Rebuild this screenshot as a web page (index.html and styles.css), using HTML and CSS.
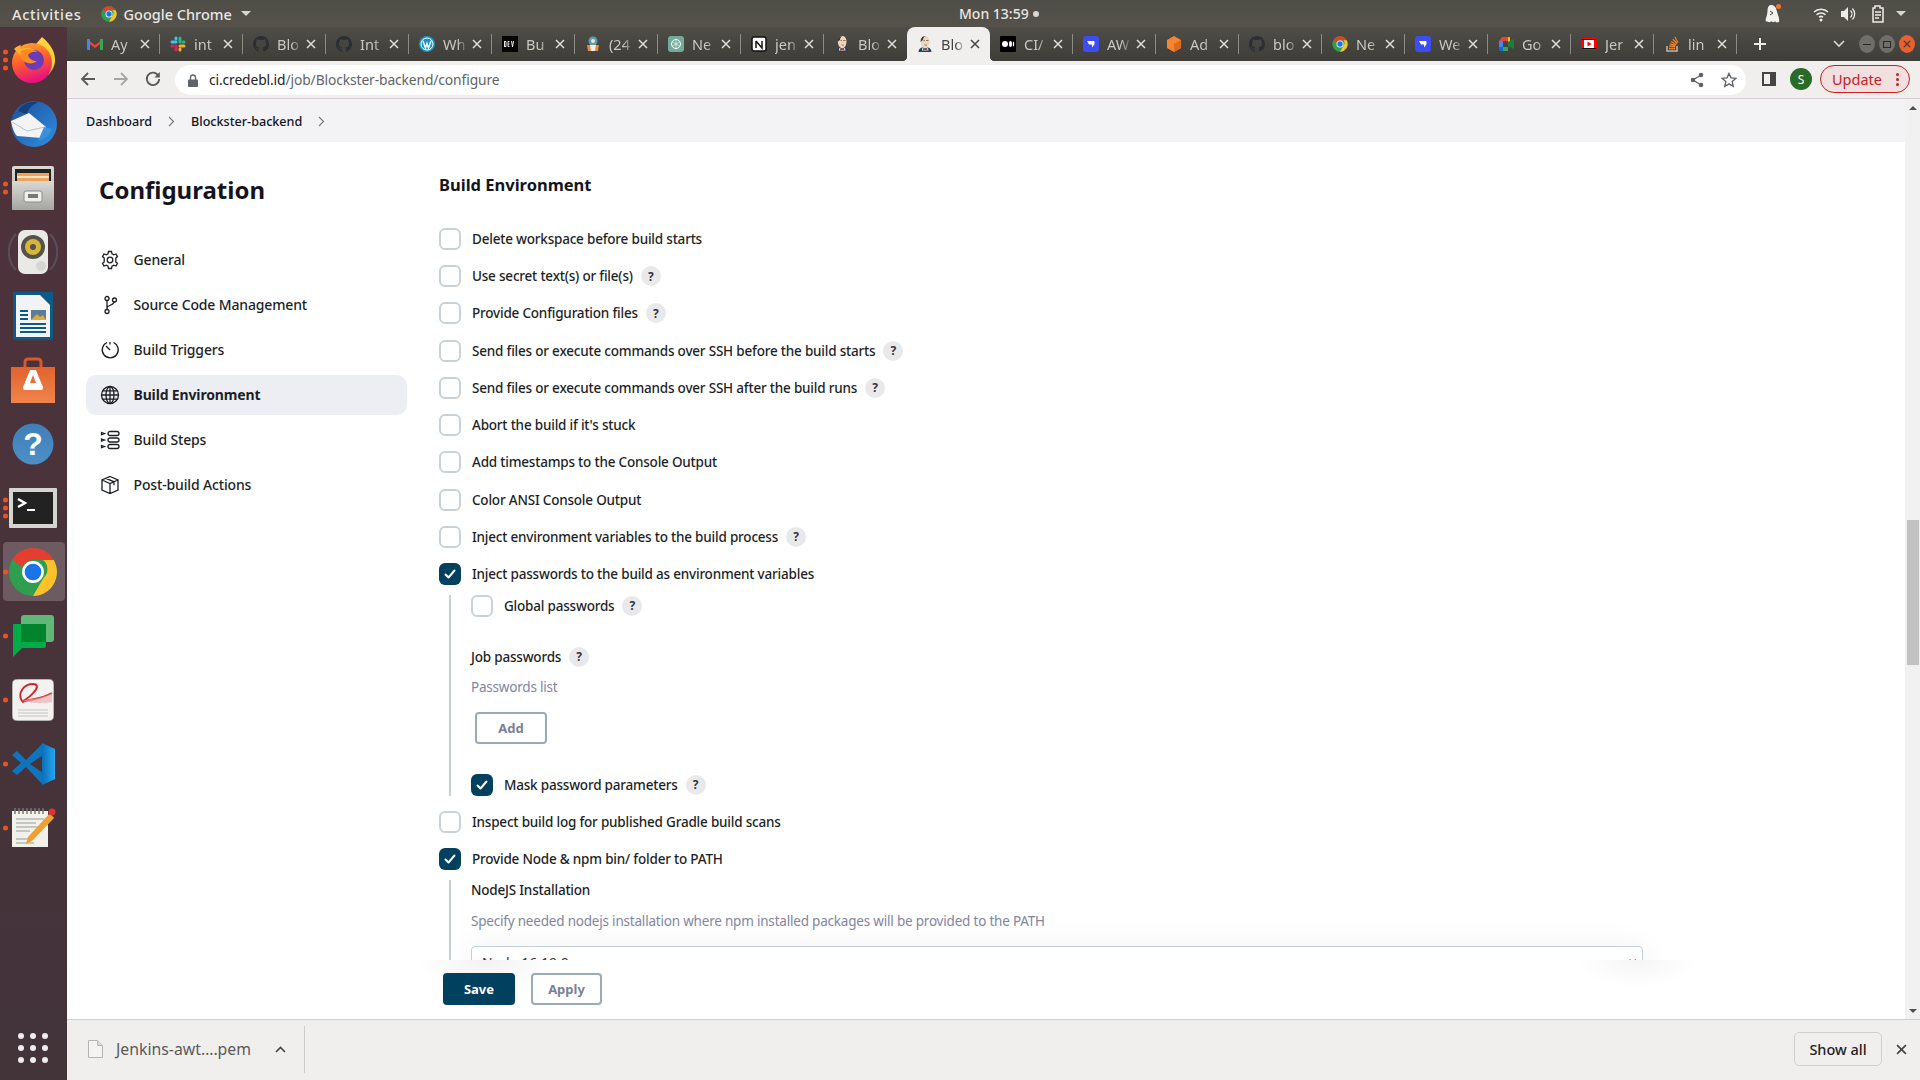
FILE: index.html
```html
<!DOCTYPE html>
<html lang="en">
<head>
    <meta charset="UTF-8">
    <title>Blockster-backend Config</title>
    <link rel="stylesheet" href="styles.css">
</head>
<body>
    <svg class="sprites" width="0" height="0">
        <defs>
            <linearGradient id="ff-body" x1="0" y1="0" x2="0.3" y2="1"><stop offset="0" stop-color="#ffb02e"/><stop offset="0.55" stop-color="#ff5a2c"/><stop offset="1" stop-color="#e9137f"/></linearGradient>
            <linearGradient id="tb-body" x1="0" y1="0" x2="1" y2="1"><stop offset="0" stop-color="#1d4f99"/><stop offset="1" stop-color="#2f8fe0"/></linearGradient>
            <linearGradient id="files-body" x1="0" y1="0" x2="0" y2="1"><stop offset="0" stop-color="#d9d9d6"/><stop offset="1" stop-color="#a5a5a2"/></linearGradient>
            <linearGradient id="bag-body" x1="0" y1="0" x2="0" y2="1"><stop offset="0" stop-color="#e2622e"/><stop offset="1" stop-color="#f0854a"/></linearGradient>
            <linearGradient id="help-body" x1="0" y1="0" x2="0" y2="1"><stop offset="0" stop-color="#3f7fb8"/><stop offset="1" stop-color="#4d8fc6"/></linearGradient>
            <linearGradient id="code-body" x1="0" y1="0" x2="1" y2="0"><stop offset="0" stop-color="#0a6fb8"/><stop offset="1" stop-color="#25a5f0"/></linearGradient>
            <symbol id="ic-github" viewBox="0 0 16 16"><path fill="#2b2f33" d="M8 0C3.6 0 0 3.6 0 8c0 3.5 2.3 6.5 5.5 7.6.4.1.5-.2.5-.4v-1.400c-2.200.5-2.700-1-2.700-1-.4-.9-.9-1.200-.9-1.200-.7-.5.1-.5.1-.5.8.1 1.200.8 1.200.8.7 1.200 1.900.9 2.300.7.1-.5.3-.9.5-1.100-1.800-.2-3.600-.9-3.600-4 0-.9.3-1.600.8-2.100-.1-.2-.4-1 .1-2.100 0 0 .7-.2 2.200.8a7.600 7.600 0 0 1 4 0c1.500-1 2.200-.8 2.200-.8.4 1.100.2 1.900.1 2.100.5.5.8 1.200.8 2.100 0 3.100-1.900 3.700-3.700 3.900.3.3.6.8.6 1.500v2.200c0 .2.1.5.6.4A8 8 0 0 0 16 8c0-4.400-3.600-8-8-8z"/></symbol>
            <symbol id="ic-jenkins" viewBox="0 0 16 16"><path fill="#24435c" d="M1.500 16c.2-2.500 1.500-4 3.500-4.500h6c2 .5 3.300 2 3.500 4.500z"/><path fill="#f0d6b9" d="M3.800 5.500C3.800 2 5.800 0 8.300 0s4.200 2 4.200 5.500c0 3.500-1.800 6.800-4.200 6.800S3.800 9 3.800 5.500z"/><path fill="#3a3a3a" d="M3.800 6C3.200 3 5 0 8.300 0 7 1 6 2 6 4c-.8.3-1.700 1-2.200 2z"/><path fill="#fff" d="M5.500 11.800l2.700 2.200 2.700-2.200.6 2.700H5z"/><path fill="#d33833" d="M6 12.500l2.200 1 2.200-1v2.500l-2.200-1-2.200 1z"/><path stroke="#555" stroke-width=".7" fill="none" d="M9 4.500h2.500M6.500 4.500H8M7.500 8.800c.8.5 1.700.5 2.500 0"/></symbol>
            <symbol id="ic-webflow" viewBox="0 0 16 16"><rect width="16" height="16" rx="3" fill="#3e4cf4"/><path fill="#fff" d="M4 5h7.500v3.200L9 11.500V8.500H6z"/></symbol>
            <symbol id="ic-chrome" viewBox="0 0 48 48"><circle cx="24" cy="24" r="23" fill="#2f9e4f"/><path fill="#e53d30" d="M24 1a23 23 0 0 1 19.900 11.500H24a11.500 11.500 0 0 0-10.600 7L4.300 12.300A23 23 0 0 1 24 1z"/><path fill="#fdc12b" d="M43.900 12.500A23 23 0 0 1 24 47l9.900-17.100a11.500 11.500 0 0 0 0-17.400z"/><circle cx="24" cy="24" r="10.500" fill="#fff"/><circle cx="24" cy="24" r="8" fill="#1a73e8"/></symbol>
            <symbol id="ic-close" viewBox="0 0 10 10"><path d="M1 1l8 8M9 1l-8 8" stroke="currentColor" stroke-width="1.500" fill="none"/></symbol>
            <symbol id="ic-check" viewBox="0 0 22 22"><path d="M6.500 11.500l3 3 6-7" stroke="#fff" stroke-width="2" fill="none" stroke-linecap="round" stroke-linejoin="round"/></symbol>
        </defs>
    </svg>

    <div class="system-bar">
        <div class="system-left">
            <span class="system-activities">Activities</span>
            <span class="system-app">
                <svg class="system-app-icon" width="16" height="16"><use href="#ic-chrome"/></svg>
                <span class="system-text">Google Chrome</span>
                <span class="caret"></span>
            </span>
        </div>
        <div class="system-clock">
            <span class="system-text">Mon 13:59</span>
            <span class="clock-dot"></span>
        </div>
        <div class="system-tray">
            <svg class="tray-person" width="20" height="22" viewBox="0 0 20 22"><path fill="#f4f2ee" d="M8 2c3 0 5 2 5.500 5l1.500 5c1 2.500 1.500 5 1 7-2 .8-3 .5-3.500-.5h-1c-.5 1-1.500 1-2.500 0H8c-1 1-2.500 1-3.500 0C3 19 2 18 3 15c1-3 1.500-5 1.500-8C4.500 4 6 2 8 2z"/><path d="M7 8l3 2-3 2" stroke="#444" fill="none"/><circle cx="15.500" cy="3.500" r="2.500" fill="#f0762e"/></svg>
            <svg class="tray-wifi" width="16" height="16" viewBox="0 0 16 16"><path d="M1 6a10 10 0 0 1 14 0M3.500 8.700a6.500 6.500 0 0 1 9 0M6 11.300a3 3 0 0 1 4 0" stroke="#eeece8" stroke-width="1.500" fill="none"/><circle cx="8" cy="14" r="1.500" fill="#eeece8"/></svg>
            <svg class="tray-sound" width="17" height="16" viewBox="0 0 17 16"><path fill="#eeece8" d="M1 5h3l4-4v14l-4-4H1z"/><path d="M10.500 4.500a5 5 0 0 1 0 7M12.500 2.500a8 8 0 0 1 0 11" stroke="#eeece8" stroke-width="1.300" fill="none"/></svg>
            <svg class="tray-battery" width="14" height="18" viewBox="0 0 14 18"><path d="M4 1h5v2h3v14H2V3h2z" fill="none" stroke="#eeece8" stroke-width="1.500"/><path d="M4 7h6M4 10h6M4 13h4" stroke="#eeece8" stroke-width="1.500"/></svg>
            <span class="caret caret-tray"></span>
        </div>
    </div>

    <div class="desktop">
        <div class="dock">
            <div class="dock-item">
                <span class="dock-dots"><i></i><i></i><i></i></span>
                <svg width="48" height="48" viewBox="0 0 48 48"><path fill="#ffd43a" d="M33 1c5 4 13 12 13 23 0 6-3 11-7 15L22 14z"/><circle cx="23" cy="27" r="20" fill="url(#ff-body)"/><path fill="#ffb02e" d="M5 13c3-3 6-4 7-4-1 2-1 3 0 4 5-2 14-1 17 4l-12 8z"/><circle cx="25" cy="24" r="10" fill="#6b3bb8"/><path fill="#ff8a1f" d="M12 15c5-3 13-2 17 1-4-.5-8 0-10 3 1 4 5 6 9 6-4 4-13 3-16-3-1-3-1-5 0-7z"/></svg>
            </div>
            <div class="dock-item">
                <svg width="50" height="50" viewBox="0 0 50 50"><circle cx="26" cy="25" r="23" fill="url(#tb-body)"/><path fill="#173f7c" d="M10 12c4-7 12-10 20-9-6 3-10 7-11 12z"/><path fill="#f4f4f4" d="M3 22l18-8 17 14-4 11-25-2c-3-3-5-9-6-15z"/><path d="M4 23l15 9 18-4" stroke="#b9c1cb" fill="none"/><path fill="#3a90e0" d="M30 42l6-14 8 2c-2 6-7 10-14 12z"/></svg>
            </div>
            <div class="dock-item">
                <span class="dock-dots"><i></i><i></i></span>
                <svg width="46" height="46" viewBox="0 0 46 46"><rect x="2" y="1" width="42" height="44" rx="2" fill="url(#files-body)"/><rect x="5" y="4" width="36" height="16" fill="#24221f"/><rect x="7" y="8" width="32" height="8" fill="#f0a15b"/><rect x="7" y="11" width="32" height="2" fill="#fbe3c9"/><rect x="2" y="16" width="42" height="29" rx="1" fill="url(#files-body)"/><rect x="14" y="26" width="18" height="11" rx="2" fill="#efefec" stroke="#8c8c8a"/><rect x="18" y="29" width="10" height="4" fill="#77777a"/></svg>
            </div>
            <div class="dock-item">
                <svg width="50" height="46" viewBox="0 0 50 46"><path d="M8 5a26 26 0 0 0 0 36M42 5a26 26 0 0 1 0 36" stroke="#6a6a78" stroke-width="2" fill="none" opacity=".5"/><rect x="10" y="1" width="30" height="44" rx="7" fill="#e9eae6"/><circle cx="25" cy="18" r="12" fill="#55524b"/><circle cx="25" cy="18" r="8" fill="#d5b53a"/><circle cx="25" cy="18" r="3" fill="#55524b"/><circle cx="33" cy="37" r="5" fill="#d5d6d2"/></svg>
            </div>
            <div class="dock-item">
                <svg width="42" height="50" viewBox="0 0 42 50"><path fill="#0e5a86" d="M1 1h40v46a2 2 0 0 1-2 2H3a2 2 0 0 1-2-2z"/><path fill="#f1f3f4" d="M4 4h24l10 10v32H4z"/><path fill="#0e5a86" d="M28 1h10a3 3 0 0 1 3 3v10z"/><path stroke="#0e5a86" stroke-width="2" d="M8 20h8M8 24h8M8 28h8M8 33h26M8 37h26M8 41h26"/><rect x="19" y="19" width="15" height="10" fill="#5a7d9a"/><path fill="#e0a93a" d="M19 29l6-6 3 3 3-2 3 5z"/></svg>
            </div>
            <div class="dock-item">
                <svg width="44" height="46" viewBox="0 0 44 46"><path d="M14 12V5a3 3 0 0 1 3-3h10a3 3 0 0 1 3 3v7" stroke="#d85a28" stroke-width="3" fill="none"/><rect y="10" width="44" height="36" fill="url(#bag-body)"/><path fill="#fff" d="M19 13h6l6 15H13z"/><rect x="12" y="28" width="20" height="5" rx="2" fill="#fff"/><path fill="#ea6f38" d="M22 18l3 8h-6z"/></svg>
            </div>
            <div class="dock-item">
                <svg width="42" height="42" viewBox="0 0 42 42"><circle cx="21" cy="21" r="20.500" fill="url(#help-body)"/><text class="dock-help" x="21" y="32" text-anchor="middle">?</text></svg>
            </div>
            <div class="dock-item">
                <span class="dock-dots"><i></i><i></i><i></i></span>
                <svg width="48" height="40" viewBox="0 0 48 40"><rect width="48" height="40" rx="1" fill="#d4d4d0"/><rect x="4" y="4" width="40" height="32" fill="#222"/><path d="M9 11l7 4-7 4" stroke="#fff" stroke-width="2.500" fill="none"/><path d="M18 22h8" stroke="#fff" stroke-width="2"/></svg>
            </div>
            <div class="dock-item dock-active">
                <span class="dock-dots"><i></i></span>
                <svg width="50" height="50"><use href="#ic-chrome"/></svg>
            </div>
            <div class="dock-item">
                <span class="dock-dots"><i></i></span>
                <svg width="44" height="44" viewBox="0 0 44 44"><rect x="10" y="1" width="33" height="27" rx="3" fill="#60b878"/><path fill="#00ac47" d="M3 10h30a2 2 0 0 1 2 2v20a2 2 0 0 1-2 2H11l-9 9V11a1 1 0 0 1 1-1z"/><path fill="#00832d" d="M10 10h25v18H10z"/></svg>
            </div>
            <div class="dock-item">
                <span class="dock-dots"><i></i></span>
                <svg width="42" height="42" viewBox="0 0 42 42"><rect width="42" height="42" rx="5" fill="#f3f2f0" stroke="#777"/><path d="M10 22c-5-8 2-17 11-17 5 0 5 4 1 8-4 5-9 8-12 10 8-3 20-3 30-9" stroke="#cc2a2a" stroke-width="2" fill="none"/><path d="M10 22c8-3 20-2 30-8v9c-10 2-20 1-30-1z" fill="#eba7a7" opacity=".6"/><path d="M6 31h30M6 34h30M6 37h30" stroke="#c4c4c4"/></svg>
            </div>
            <div class="dock-item">
                <span class="dock-dots"><i></i></span>
                <svg width="44" height="44" viewBox="0 0 44 44"><path fill="#0d74bd" d="M6 33L1 29l9-8-9-8 5-4 9 9L32 1v12L19 22l13 9v12L15 25z"/><path fill="url(#code-body)" d="M31 1l13 6v30l-13 6z"/></svg>
            </div>
            <div class="dock-item">
                <span class="dock-dots"><i></i></span>
                <svg width="46" height="42" viewBox="0 0 46 42"><rect x="2" y="4" width="36" height="36" fill="#f2f2ec"/><path d="M5 1v6M9 1v6M13 1v6M17 1v6M21 1v6M25 1v6M29 1v6M33 1v6" stroke="#777" stroke-width="1.500"/><path d="M6 12h28M6 16h20M6 20h24M6 24h14M6 32h12M6 36h18" stroke="#999"/><path fill="#f0a030" d="M40 6l4 5-22 23-6 3 2-7z"/><circle cx="42" cy="5" r="3.500" fill="#d33"/></svg>
            </div>
            <div class="dock-apps">
                <i></i><i></i><i></i><i></i><i></i><i></i><i></i><i></i><i></i>
            </div>
        </div>

        <div class="browser">
            <div class="tab-strip">
                <div class="tab">
                    <svg class="tab-icon" viewBox="0 0 16 16"><path fill="#ea4335" d="M0 3l8 6 8-6v3l-8 6-8-6z"/><path fill="#4285f4" d="M0 3h3v11H1a1 1 0 0 1-1-1z"/><path fill="#34a853" d="M13 3h3v10a1 1 0 0 1-1 1h-2z"/></svg>
                    <span class="tab-title">Ay</span><svg class="tab-close"><use href="#ic-close"/></svg>
                </div>
                <div class="tab">
                    <svg class="tab-icon" viewBox="0 0 16 16"><path stroke="#36c5f0" stroke-width="3" stroke-linecap="round" d="M2 6h4"/><path stroke="#2eb67d" stroke-width="3" stroke-linecap="round" d="M10 2v4"/><path stroke="#ecb22e" stroke-width="3" stroke-linecap="round" d="M10 10h4"/><path stroke="#e01e5a" stroke-width="3" stroke-linecap="round" d="M6 10v4"/><path stroke="#36c5f0" stroke-width="3" stroke-linecap="round" d="M6 2v1"/><path stroke="#2eb67d" stroke-width="3" stroke-linecap="round" d="M14 6h-1"/><path stroke="#ecb22e" stroke-width="3" stroke-linecap="round" d="M10 14v-1"/><path stroke="#e01e5a" stroke-width="3" stroke-linecap="round" d="M2 10h1"/></svg>
                    <span class="tab-title">int</span><svg class="tab-close"><use href="#ic-close"/></svg>
                </div>
                <div class="tab"><svg class="tab-icon"><use href="#ic-github"/></svg><span class="tab-title">Blo</span><svg class="tab-close"><use href="#ic-close"/></svg></div>
                <div class="tab"><svg class="tab-icon"><use href="#ic-github"/></svg><span class="tab-title">Int</span><svg class="tab-close"><use href="#ic-close"/></svg></div>
                <div class="tab">
                    <svg class="tab-icon" viewBox="0 0 16 16"><circle cx="8" cy="8" r="8" fill="#1a94c4"/><circle cx="8" cy="8" r="6" fill="none" stroke="#fff"/><path d="M4 5l2.500 7L8 7.500 9.500 12 12 5" stroke="#fff" stroke-width="1.400" fill="none"/></svg>
                    <span class="tab-title">Wh</span><svg class="tab-close"><use href="#ic-close"/></svg>
                </div>
                <div class="tab">
                    <svg class="tab-icon" viewBox="0 0 16 16"><rect width="16" height="16" fill="#050505"/><path d="M2.500 5v6M2.500 5.500h1.500v5H2.500M7.500 5.500H6v5h1.500M6 8h1.500M9.500 5l1 6 1-6" stroke="#fff" stroke-width=".9" fill="none"/></svg>
                    <span class="tab-title">Bu</span><svg class="tab-close"><use href="#ic-close"/></svg>
                </div>
                <div class="tab">
                    <svg class="tab-icon" viewBox="0 0 16 16"><circle cx="8" cy="5" r="4.500" fill="#5a9fb0"/><circle cx="8" cy="5" r="2" fill="#e8e8e0"/><path fill="#e58a3a" d="M2 9h12l-1 6H3z"/><path fill="#f4efe6" d="M5 9h6l-1 6H6z"/></svg>
                    <span class="tab-title">(24</span><svg class="tab-close"><use href="#ic-close"/></svg>
                </div>
                <div class="tab">
                    <svg class="tab-icon" viewBox="0 0 16 16"><rect width="16" height="16" rx="3" fill="#74aa9c"/><circle cx="8" cy="8" r="4.500" fill="none" stroke="#fff"/><path d="M8 3.500v9M4 5.800l8 4.400M12 5.800l-8 4.400" stroke="#fff" stroke-width=".6"/></svg>
                    <span class="tab-title">Ne</span><svg class="tab-close"><use href="#ic-close"/></svg>
                </div>
                <div class="tab">
                    <svg class="tab-icon" viewBox="0 0 16 16"><rect x="1" y="1" width="14" height="14" rx="2" fill="#fff" stroke="#111" stroke-width="1.500"/><path d="M5 5v7M5 5l6 7V5" stroke="#111" stroke-width="1.500" fill="none"/></svg>
                    <span class="tab-title">jen</span><svg class="tab-close"><use href="#ic-close"/></svg>
                </div>
                <div class="tab tab-before-active"><svg class="tab-icon"><use href="#ic-jenkins"/></svg><span class="tab-title">Blo</span><svg class="tab-close"><use href="#ic-close"/></svg></div>
                <div class="tab tab-active"><svg class="tab-icon"><use href="#ic-jenkins"/></svg><span class="tab-title">Blo</span><svg class="tab-close"><use href="#ic-close"/></svg></div>
                <div class="tab">
                    <svg class="tab-icon" viewBox="0 0 16 16"><rect width="16" height="16" rx="1" fill="#000"/><circle cx="5" cy="8" r="3" fill="#fff"/><ellipse cx="10.500" cy="8" rx="1.500" ry="3" fill="#fff"/><ellipse cx="13.500" cy="8" rx=".7" ry="2.500" fill="#fff"/></svg>
                    <span class="tab-title">CI/</span><svg class="tab-close"><use href="#ic-close"/></svg>
                </div>
                <div class="tab"><svg class="tab-icon"><use href="#ic-webflow"/></svg><span class="tab-title">AW</span><svg class="tab-close"><use href="#ic-close"/></svg></div>
                <div class="tab">
                    <svg class="tab-icon" viewBox="0 0 16 16"><path fill="#f58535" d="M8 0l7 4v8l-7 4-7-4V4z"/><path fill="#d96a1e" d="M8 8l7-4v8l-7 4z"/></svg>
                    <span class="tab-title">Ad</span><svg class="tab-close"><use href="#ic-close"/></svg>
                </div>
                <div class="tab"><svg class="tab-icon"><use href="#ic-github"/></svg><span class="tab-title">blo</span><svg class="tab-close"><use href="#ic-close"/></svg></div>
                <div class="tab"><svg class="tab-icon"><use href="#ic-chrome"/></svg><span class="tab-title">Ne</span><svg class="tab-close"><use href="#ic-close"/></svg></div>
                <div class="tab"><svg class="tab-icon"><use href="#ic-webflow"/></svg><span class="tab-title">We</span><svg class="tab-close"><use href="#ic-close"/></svg></div>
                <div class="tab">
                    <svg class="tab-icon" viewBox="0 0 16 16"><path fill="#ea4335" d="M4 1h6v4H1z"/><path fill="#4285f4" d="M1 5h4v6H1z"/><path fill="#1967d2" d="M1 11h4v4H2a1 1 0 0 1-1-1z"/><path fill="#34a853" d="M5 11h5v4H5z"/><path fill="#fbbc04" d="M10 1h1a1 1 0 0 1 1 1v4h-2z"/><path fill="#188038" d="M10 6l6-3v10l-6-3z"/></svg>
                    <span class="tab-title">Go</span><svg class="tab-close"><use href="#ic-close"/></svg>
                </div>
                <div class="tab">
                    <svg class="tab-icon" viewBox="0 0 16 16"><rect y="2" width="16" height="12" rx="3" fill="#f00"/><rect x="3" y="4" width="10" height="8" fill="#fff"/><path d="M6.500 5.500v5l4-2.500z" fill="#f00"/><path d="M1 3.500h14M1 12.500h14" stroke="#111"/></svg>
                    <span class="tab-title">Jer</span><svg class="tab-close"><use href="#ic-close"/></svg>
                </div>
                <div class="tab">
                    <svg class="tab-icon" viewBox="0 0 16 16"><path d="M3 10v5h10v-5" stroke="#bcbbbb" stroke-width="1.500" fill="none"/><path d="M5 12.500h6M5.200 10l6 .5M5.800 7.800l5.800 1.500M7 5.500l5.200 3M8.800 3.200l4.400 4.300M11 1l2.800 5.500" stroke="#f48024" stroke-width="1.300"/></svg>
                    <span class="tab-title">lin</span><svg class="tab-close"><use href="#ic-close"/></svg>
                </div>
                <svg class="tab-new" width="14" height="14" viewBox="0 0 14 14"><path d="M7 1v12M1 7h12" stroke="#eeece8" stroke-width="2"/></svg>
                <div class="window-controls">
                    <svg class="tab-list" width="12" height="8" viewBox="0 0 12 8"><path d="M1 1l5 5 5-5" stroke="#d9d7d2" stroke-width="1.600" fill="none"/></svg>
                    <span class="window-btn"><span class="window-min"></span></span>
                    <span class="window-btn"><span class="window-max"></span></span>
                    <span class="window-btn window-close"><svg width="8" height="8"><use href="#ic-close"/></svg></span>
                </div>
            </div>

            <div class="toolbar">
                <svg class="nav-icon nav-back" width="16" height="16" viewBox="0 0 16 16"><path d="M15 8H2M8 2L2 8l6 6" stroke="#5a5a5a" stroke-width="1.800" fill="none"/></svg>
                <svg class="nav-icon nav-forward" width="16" height="16" viewBox="0 0 16 16"><path d="M1 8h13M8 2l6 6-6 6" stroke="#a5a5a5" stroke-width="1.800" fill="none"/></svg>
                <svg class="nav-icon nav-reload" width="16" height="16" viewBox="0 0 16 16"><path d="M13.500 5A6.200 6.200 0 1 0 14.200 8" stroke="#5a5a5a" stroke-width="1.800" fill="none"/><path fill="#5a5a5a" d="M14.800 1v5.500H9.300z"/></svg>
                <div class="omnibox">
                    <svg class="omni-lock" width="10" height="13" viewBox="0 0 10 13"><path d="M2.500 6V3.500a2.500 2.500 0 0 1 5 0V6" stroke="#5f6368" stroke-width="1.300" fill="none"/><rect y="5.500" width="10" height="7.500" rx="1" fill="#5f6368"/></svg>
                    <span class="omni-url"><span class="omni-host">ci.credebl.id</span>/job/Blockster-backend/configure</span>
                    <svg class="omni-share" width="14" height="16" viewBox="0 0 14 16"><path d="M11 3L3 8l8 5" stroke="#5f6368" stroke-width="1.300" fill="none"/><circle cx="11" cy="3" r="2.300" fill="#5f6368"/><circle cx="3" cy="8" r="2.300" fill="#5f6368"/><circle cx="11" cy="13" r="2.300" fill="#5f6368"/></svg>
                    <svg class="omni-star" width="16" height="16" viewBox="0 0 16 16"><path d="M8 1.500l2 4.400 4.800.5-3.600 3.200 1 4.700L8 11.900l-4.200 2.400 1-4.700L1.200 6.400 6 5.900z" stroke="#5f6368" stroke-width="1.400" fill="none"/></svg>
                </div>
                <svg class="side-panel" width="14" height="14" viewBox="0 0 14 14"><rect x="1" y="1" width="12" height="12" fill="none" stroke="#444" stroke-width="2"/><rect x="8" y="1" width="5" height="12" fill="#444"/></svg>
                <span class="avatar">S</span>
                <span class="update-pill">Update<span class="update-dots"><i></i><i></i><i></i></span></span>
            </div>

            <div class="page-row">
                <div class="page">
                    <div class="breadcrumbs">
                        <a class="crumb">Dashboard</a>
                        <svg class="crumb-sep" width="7" height="11" viewBox="0 0 7 11"><path d="M1 1l4.500 4.500L1 10" stroke="#777" stroke-width="1.100" fill="none"/></svg>
                        <a class="crumb">Blockster-backend</a>
                        <svg class="crumb-sep" width="7" height="11" viewBox="0 0 7 11"><path d="M1 1l4.500 4.500L1 10" stroke="#777" stroke-width="1.100" fill="none"/></svg>
                    </div>

                    <div class="config">
                        <aside class="side-nav">
                            <h1 class="side-title">Configuration</h1>
                            <a class="side-link">
                                <svg class="side-icon" viewBox="0 0 20 20"><circle cx="10" cy="10" r="2.800"/><path d="M8.500 1.500h3l.5 2.300 1.800 1 2.200-.8 1.500 2.600L15.800 8v4l1.700 1.400-1.500 2.600-2.200-.8-1.800 1-.5 2.300h-3l-.5-2.300-1.800-1-2.200.8-1.500-2.600L4.200 12V8L2.500 6.600 4 4l2.200.8 1.800-1z"/></svg>
                                <span class="side-text">General</span>
                            </a>
                            <a class="side-link">
                                <svg class="side-icon" viewBox="0 0 20 20"><circle cx="7" cy="3.500" r="2"/><circle cx="7" cy="16.500" r="2"/><circle cx="14.500" cy="5" r="2"/><path d="M7 5.500v9M14 7c0 3.500-7 3-7 6"/></svg>
                                <span class="side-text">Source Code Management</span>
                            </a>
                            <a class="side-link">
                                <svg class="side-icon" viewBox="0 0 20 20"><path d="M7 2.500a8 8 0 1 0 6.500 0"/><path d="M10 10L6 6"/><path d="M10 2v2.500"/></svg>
                                <span class="side-text">Build Triggers</span>
                            </a>
                            <a class="side-link side-link-active">
                                <svg class="side-icon" viewBox="0 0 20 20"><circle cx="10" cy="10" r="8.500"/><ellipse cx="10" cy="10" rx="4" ry="8.500"/><path d="M10 1.500v17M1.500 10h17M2.800 5.800h14.400M2.800 14.200h14.400"/></svg>
                                <span class="side-text">Build Environment</span>
                            </a>
                            <a class="side-link">
                                <svg class="side-icon" viewBox="0 0 20 20"><rect x="8" y="1.500" width="11" height="4" rx="2"/><rect x="8" y="8" width="11" height="4" rx="2"/><rect x="8" y="14.500" width="11" height="4" rx="2"/><path d="M1.500 2.500l3 1-3 1zM1.500 9l3 1-3 1zM1.500 15.500l3 1-3 1z"/></svg>
                                <span class="side-text">Build Steps</span>
                            </a>
                            <a class="side-link">
                                <svg class="side-icon" viewBox="0 0 20 20"><path d="M10 1.500l8 3.500v10l-8 3.500L2 15V5zM2 5l8 3.500L18 5M10 8.500v10M6 3.300l8 3.500v3.500"/></svg>
                                <span class="side-text">Post-build Actions</span>
                            </a>
                        </aside>

                        <div class="form-scroll">
                            <h2 class="section-title">Build Environment</h2>

                            <label class="check-row"><span class="checkbox"></span><span class="check-label">Delete workspace before build starts</span></label>
                            <label class="check-row"><span class="checkbox"></span><span class="check-label">Use secret text(s) or file(s)</span><span class="help">?</span></label>
                            <label class="check-row"><span class="checkbox"></span><span class="check-label">Provide Configuration files</span><span class="help">?</span></label>
                            <label class="check-row"><span class="checkbox"></span><span class="check-label">Send files or execute commands over SSH before the build starts</span><span class="help">?</span></label>
                            <label class="check-row"><span class="checkbox"></span><span class="check-label">Send files or execute commands over SSH after the build runs</span><span class="help">?</span></label>
                            <label class="check-row"><span class="checkbox"></span><span class="check-label">Abort the build if it's stuck</span></label>
                            <label class="check-row"><span class="checkbox"></span><span class="check-label">Add timestamps to the Console Output</span></label>
                            <label class="check-row"><span class="checkbox"></span><span class="check-label">Color ANSI Console Output</span></label>
                            <label class="check-row"><span class="checkbox"></span><span class="check-label">Inject environment variables to the build process</span><span class="help">?</span></label>
                            <label class="check-row check-row-open"><span class="checkbox checkbox-on"><svg width="22" height="22"><use href="#ic-check"/></svg></span><span class="check-label">Inject passwords to the build as environment variables</span></label>

                            <div class="nested">
                                <label class="check-row check-row-inner"><span class="checkbox"></span><span class="check-label">Global passwords</span><span class="help">?</span></label>
                                <div class="field-label field-label-job">Job passwords<span class="help">?</span></div>
                                <div class="field-hint field-hint-list">Passwords list</div>
                                <button class="btn-outline btn-add">Add</button>
                                <label class="check-row check-row-inner check-row-last"><span class="checkbox checkbox-on"><svg width="22" height="22"><use href="#ic-check"/></svg></span><span class="check-label">Mask password parameters</span><span class="help">?</span></label>
                            </div>

                            <label class="check-row"><span class="checkbox"></span><span class="check-label">Inspect build log for published Gradle build scans</span></label>
                            <label class="check-row check-row-open"><span class="checkbox checkbox-on"><svg width="22" height="22"><use href="#ic-check"/></svg></span><span class="check-label">Provide Node &amp; npm bin/ folder to PATH</span></label>

                            <div class="nested">
                                <div class="field-label">NodeJS Installation</div>
                                <div class="field-hint field-hint-node">Specify needed nodejs installation where npm installed packages will be provided to the PATH</div>
                                <div class="select-box">
                                    Node 16.19.0
                                    <svg class="select-arrows" width="9" height="4" viewBox="0 0 9 4"><path d="M1 0v4M6 0l2 4" stroke="#777" fill="none"/></svg>
                                </div>
                            </div>
                        </div>
                    </div>

                    <div class="save-bar">
                        <button class="btn-save">Save</button>
                        <button class="btn-outline btn-apply">Apply</button>
                    </div>
                </div>

                <div class="scrollbar">
                    <span class="scroll-up"></span>
                    <span class="scroll-thumb"></span>
                    <span class="scroll-down"></span>
                </div>
            </div>

            <div class="download-bar">
                <svg class="dl-file" width="15" height="18" viewBox="0 0 15 18"><path d="M.5.500h9l5 5v12H.5z" fill="#f4f3f1" stroke="#b5b5b3"/><path d="M9.500.500v5h5" fill="#dedcda" stroke="#b5b5b3"/></svg>
                <span class="dl-name">Jenkins-awt….pem</span>
                <svg class="dl-caret" width="11" height="7" viewBox="0 0 11 7"><path d="M1 6l4.500-4.500L10 6" stroke="#444" stroke-width="1.600" fill="none"/></svg>
                <span class="dl-sep"></span>
                <button class="dl-show">Show all</button>
                <svg class="dl-close" width="11" height="11"><use href="#ic-close"/></svg>
            </div>
        </div>
    </div>
</body>
</html>
```

FILE: styles.css
```css
* {
    margin: 0;
    padding: 0;
    box-sizing: border-box;
}

html, body {
    width: 1920px;
    height: 1080px;
    overflow: hidden;
}

body {
    display: flex;
    flex-direction: column;
    font-family: "Noto Sans", "Open Sans", sans-serif;
    color: #1d1f27;
    background: #fff;
}

.sprites {
    position: absolute;
}

/* Ubuntu top bar */
.system-bar {
    height: 27px;
    flex: none;
    display: flex;
    align-items: center;
    background: linear-gradient(#4f4d47, #55524b);
    color: #e8e6e1;
    font-size: 14.500px;
    font-weight: 500;
    padding: 0 14px 0 12px;
}

.system-left {
    width: 800px;
    display: flex;
    align-items: center;
    gap: 20px;
}

.system-activities {
    letter-spacing: 0.7px;
}

.system-app {
    display: flex;
    align-items: center;
    gap: 6px;
}

.caret {
    width: 0;
    height: 0;
    border-left: 5px solid transparent;
    border-right: 5px solid transparent;
    border-top: 5px solid #d8d6d1;
    margin-left: 3px;
}

.caret-tray {
    margin-left: -5px;
}

.system-clock {
    display: flex;
    align-items: center;
    gap: 4px;
    margin-left: 147px;
    font-size: 14px;
}

.clock-dot {
    width: 6px;
    height: 6px;
    border-radius: 50%;
    background: #d8d6d1;
}

.system-tray {
    display: flex;
    align-items: center;
    justify-content: flex-end;
    gap: 16px;
    margin-left: auto;
}

.tray-person {
    margin-right: 14px;
}

.tray-sound {
    margin-left: -5px;
}

.tray-battery {
    margin-left: -2px;
}

.desktop {
    flex: 1;
    display: flex;
    min-height: 0;
}

/* Dock */
.dock {
    width: 67px;
    flex: none;
    background: linear-gradient(#4f323a, #43343a);
    display: flex;
    flex-direction: column;
    align-items: center;
    padding-top: 0.5px;
    position: relative;
}

.dock-item {
    width: 62px;
    height: 64px;
    flex: none;
    display: flex;
    align-items: center;
    justify-content: center;
    position: relative;
    padding-right: 2px;
}

.dock-active {
    background: rgba(255, 255, 255, 0.2);
    border-radius: 4px;
    height: 59px;
    margin: 2.500px 0;
}

.dock-dots {
    position: absolute;
    left: 0;
    top: 50%;
    transform: translateY(-50%);
    display: flex;
    flex-direction: column;
    gap: 3px;
}

.dock-dots i {
    display: block;
    width: 5px;
    height: 5px;
    border-radius: 50%;
    background: #e95420;
}

.dock-help {
    font-family: "Liberation Sans", sans-serif;
    font-size: 32px;
    font-weight: 700;
    fill: #fff;
}

.dock-apps {
    position: absolute;
    left: 18px;
    top: 1006px;
    display: grid;
    grid-template-columns: repeat(3, 6px);
    gap: 6px;
}

.dock-apps i {
    display: block;
    width: 6px;
    height: 6px;
    border-radius: 50%;
    background: #efedf0;
}

/* Chrome */
.browser {
    flex: 1;
    min-width: 0;
    display: flex;
    flex-direction: column;
}

.tab-strip {
    height: 34px;
    flex: none;
    display: flex;
    align-items: stretch;
    padding-left: 10px;
    background: linear-gradient(#4f4d47, #3e3d37);
}

.tab {
    width: 83px;
    flex: none;
    display: flex;
    align-items: center;
    padding-left: 10px;
    position: relative;
    color: #c9c8c3;
    font-size: 14.500px;
}

.tab::after {
    content: "";
    position: absolute;
    right: 0;
    top: 7px;
    height: 20px;
    width: 1px;
    background: #8c8b85;
}

.tab-before-active::after,
.tab-active::after {
    display: none;
}

.tab-active {
    background: #f1efed;
    border-radius: 8px 8px 0 0;
    color: #45443f;
}

.tab-active::before {
    content: "";
    position: absolute;
    left: -5px;
    right: -5px;
    bottom: 0;
    height: 5px;
    background:
        radial-gradient(circle at 0 0, transparent 5px, #f1efed 5.500px) left bottom / 5px 5px no-repeat,
        radial-gradient(circle at 100% 0, transparent 5px, #f1efed 5.500px) right bottom / 5px 5px no-repeat;
}

.tab-icon {
    width: 16px;
    height: 16px;
    flex: none;
}

.tab-title {
    width: 26px;
    margin-left: 8px;
    overflow: hidden;
    white-space: nowrap;
    -webkit-mask-image: linear-gradient(90deg, #000 55%, transparent 95%);
    mask-image: linear-gradient(90deg, #000 55%, transparent 95%);
}

.tab-close {
    width: 10px;
    height: 10px;
    flex: none;
    margin-left: 3px;
    color: #e0dfda;
}

.tab-active .tab-close {
    color: #45443f;
}

.tab-new {
    align-self: center;
    margin-left: 16px;
}

.window-controls {
    display: flex;
    align-items: center;
    margin-left: auto;
    padding-right: 5px;
    gap: 4px;
}

.tab-list {
    margin-right: 10px;
}

.window-btn {
    width: 16px;
    height: 18px;
    border-radius: 50%;
    background: #6f6e69;
    display: flex;
    align-items: center;
    justify-content: center;
    color: #3b3a36;
}

.window-min {
    width: 8px;
    height: 1px;
    background: #2c2b28;
}

.window-max {
    width: 8px;
    height: 7px;
    border: 1px solid #2c2b28;
}

.window-close {
    background: #e9602f;
}

.toolbar {
    height: 38px;
    flex: none;
    display: flex;
    align-items: center;
    background: #f1efed;
    border-bottom: 1px solid #d4d0d6;
    padding-left: 13px;
    padding-bottom: 1px;
}

.nav-forward {
    margin-left: 17px;
}

.nav-reload {
    margin-left: 16px;
}

.omnibox {
    width: 1571px;
    height: 30px;
    margin-left: 14px;
    border-radius: 15px;
    background: #fff;
    display: flex;
    align-items: center;
    padding-left: 13px;
    margin-top: 2px;
}

.omni-url {
    margin-left: 11px;
    padding-bottom: 2px;
    font-size: 13.800px;
    letter-spacing: -0.1px;
    color: #5f6368;
}

.omni-host {
    color: #202124;
}

.omni-share {
    margin-left: auto;
}

.omni-star {
    margin-left: 17px;
    margin-right: 9px;
}

.side-panel {
    margin-left: 16px;
    flex: none;
}

.avatar {
    width: 22px;
    height: 22px;
    margin-left: 14px;
    flex: none;
    border-radius: 50%;
    background: #2c6a28;
    color: #fff;
    font-size: 12px;
    display: flex;
    align-items: center;
    justify-content: center;
}

.update-pill {
    width: 90px;
    height: 28px;
    margin-left: 8px;
    flex: none;
    border: 1px solid #c5221f;
    border-radius: 14px;
    background: #f2dfdf;
    color: #c5221f;
    font-size: 14.500px;
    display: flex;
    align-items: center;
    padding-left: 11px;
}

.update-dots {
    display: flex;
    flex-direction: column;
    gap: 2px;
    margin-left: auto;
    margin-right: 10px;
}

.update-dots i {
    display: block;
    width: 3px;
    height: 3px;
    border-radius: 50%;
    background: #c5221f;
}

/* Jenkins page */
.page-row {
    flex: 1;
    min-height: 0;
    display: flex;
}

.page {
    flex: 1;
    min-width: 0;
    display: flex;
    flex-direction: column;
}

.breadcrumbs {
    height: 43px;
    flex: none;
    display: flex;
    align-items: center;
    background: #f3f3f6;
    padding: 1px 0 0 19px;
}

.crumb {
    font-size: 12.600px;
    font-weight: 500;
    color: #14141f;
}

.crumb-sep {
    margin: 0 16px 0 16px;
}

.config {
    flex: 1;
    min-height: 0;
    display: flex;
    padding-left: 19px;
    gap: 32px;
}

.side-nav {
    width: 321px;
    flex: none;
}

.side-title {
    font-size: 24px;
    font-weight: 700;
    line-height: 34px;
    margin: 31px 0 33px 13px;
    color: #14141f;
}

.side-link {
    height: 40px;
    margin-bottom: 5px;
    display: flex;
    align-items: center;
    gap: 13.500px;
    padding-left: 14px;
    border-radius: 10px;
    font-size: 14px;
    font-weight: 500;
    letter-spacing: -0.15px;
    color: #1d1f27;
}

.side-text {
    padding-bottom: 2px;
}

.side-link-active {
    background: #eceef3;
    font-weight: 700;
}

.side-icon {
    width: 20px;
    height: 20px;
    flex: none;
    fill: none;
    stroke: #1d1f27;
    stroke-width: 1.300;
}

.form-scroll {
    flex: 1;
    min-width: 0;
    overflow: hidden;
}

.section-title {
    font-size: 16.500px;
    font-weight: 700;
    line-height: 24px;
    margin: 31px 0 31px;
    color: #14141f;
}

.check-row {
    display: flex;
    align-items: center;
    height: 22px;
    margin-bottom: 15.220px;
}

.check-row-open {
    margin-bottom: 10px;
}

.check-row-inner {
    margin-bottom: 0;
}

.check-row-last {
    margin-top: 30px;
}

.checkbox {
    width: 22px;
    height: 22px;
    flex: none;
    border: 2px solid #c9d3d7;
    border-radius: 6px;
    background: #fff;
}

.checkbox-on {
    border: none;
    background: #01405f;
}

.checkbox-on svg {
    display: block;
}

.check-label {
    margin-left: 11px;
    font-size: 13.500px;
    font-weight: 500;
    letter-spacing: -0.2px;
    color: #1d1f27;
}

.help {
    width: 20px;
    height: 20px;
    flex: none;
    margin-left: 8px;
    border-radius: 50%;
    background: #e9e9ec;
    color: #33343c;
    font-size: 12px;
    font-weight: 700;
    letter-spacing: 0;
    display: flex;
    align-items: center;
    justify-content: center;
}

.nested {
    margin-left: 10px;
    margin-bottom: 15px;
    padding-left: 20px;
    border-left: 2px solid #c3d0d5;
}

.field-label {
    display: flex;
    align-items: center;
    height: 20px;
    font-size: 13.500px;
    font-weight: 500;
    letter-spacing: -0.2px;
    color: #1d1f27;
}

.field-label-job {
    margin-top: 30px;
}

.field-hint {
    font-size: 13.500px;
    letter-spacing: -0.2px;
    line-height: 20px;
    color: #8385a0;
}

.field-hint-list {
    margin-top: 10px;
    margin-bottom: 15px;
}

.field-hint-node {
    margin-top: 11px;
    margin-bottom: 15px;
}

.btn-outline {
    height: 32px;
    border: 2px solid #9aabb3;
    border-radius: 4px;
    background: #fff;
    color: #7d7f98;
    font-family: inherit;
    font-size: 13px;
    font-weight: 700;
}

.btn-add {
    display: block;
    width: 72px;
    margin-left: 4px;
}

.select-box {
    width: 1172px;
    height: 40px;
    border: 1.500px solid #c3d0d5;
    border-radius: 4px;
    padding: 6px 4px 0 10px;
    font-size: 14px;
    color: #33343c;
    box-shadow: 0 0 30px rgba(0, 0, 0, 0.06);
    display: flex;
    justify-content: space-between;
    align-items: flex-start;
}

.select-arrows {
    margin-top: 6px;
}

.save-bar {
    height: 60px;
    flex: none;
    display: flex;
    align-items: center;
    gap: 16px;
    padding: 0 0 2px 376px;
    border-bottom: 1px solid #cfcfcf;
    background:
        radial-gradient(ellipse 70px 35px at 420px 0, rgba(0, 0, 0, 0.05), transparent),
        radial-gradient(ellipse 60px 28px at 1570px 0, rgba(0, 0, 0, 0.04), transparent),
        #fff;
    position: relative;
}

.btn-save {
    width: 72px;
    height: 32px;
    border: none;
    border-radius: 4px;
    background: #01405f;
    color: #fff;
    font-family: inherit;
    font-size: 13px;
    font-weight: 700;
}

.btn-apply {
    width: 71px;
}

.scrollbar {
    width: 15px;
    flex: none;
    background: #f1f1f1;
    display: flex;
    flex-direction: column;
    align-items: center;
    border-bottom: 1px solid #cfcfcf;
}

.scroll-up {
    margin-top: 7px;
    border-left: 4px solid transparent;
    border-right: 4px solid transparent;
    border-bottom: 4px solid #505050;
}

.scroll-thumb {
    width: 12px;
    height: 145px;
    margin-top: 410px;
    background: #c1c1c1;
}

.scroll-down {
    margin-top: auto;
    margin-bottom: 6px;
    border-left: 4px solid transparent;
    border-right: 4px solid transparent;
    border-top: 4px solid #505050;
}

/* Download shelf */
.download-bar {
    height: 60px;
    flex: none;
    display: flex;
    align-items: center;
    background: #f1efed;
    padding: 0 0 2px 21px;
}

.dl-name {
    margin-left: 13px;
    width: 136px;
    font-size: 15.800px;
    color: #5a5a58;
    white-space: nowrap;
}

.dl-caret {
    margin-left: 23px;
}

.dl-sep {
    width: 1px;
    height: 47px;
    margin-left: 18px;
    background: #cdcbc9;
}

.dl-show {
    width: 88px;
    height: 34px;
    margin-left: auto;
    border: 1px solid #d2d0ce;
    border-radius: 5px;
    background: #f1efed;
    font-family: inherit;
    font-size: 14.500px;
    font-weight: 500;
    color: #202124;
}

.dl-close {
    margin: 0 13px 0 14px;
    color: #444;
}
```
